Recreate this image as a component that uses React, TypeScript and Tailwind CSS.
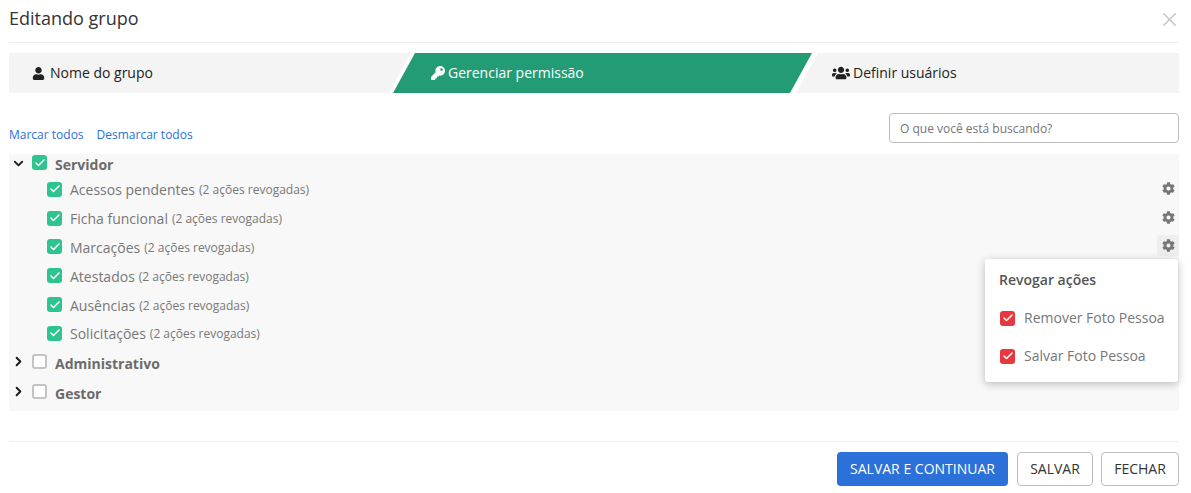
import { ChevronDown, ChevronRight, X, Check } from "lucide-react";
import { FaUser, FaKey, FaUsers, FaCog } from "react-icons/fa";

const children = ["Acessos pendentes", "Ficha funcional", "Marcações", "Atestados", "Ausências", "Solicitações"];

const Box = ({ color = "green" }: { color?: "green" | "red" | "empty" }) => {
  if (color === "empty") {
    return <span className="block w-[15px] h-[15px] shrink-0 rounded-[3px] border-2 border-[#c4c4c4] bg-white" />;
  }
  return (
    <span
      className={`flex items-center justify-center w-[15px] h-[15px] shrink-0 rounded-[3px] text-white ${
        color === "red" ? "bg-[#e5383f]" : "bg-[#2ec490]"
      }`}
    >
      <Check size={12} strokeWidth={3} />
    </span>
  );
};

const Parent = ({ label, open, checked, first }: { label: string; open?: boolean; checked?: boolean; first?: boolean }) => (
  <div className={`flex items-center pl-[2px] ${first ? "h-[22px]" : "h-[30px]"}`}>
    <span className="w-[21px] -mt-[4px] text-[#1a1a1a]">
      {open ? <ChevronDown size={15} strokeWidth={3} /> : <ChevronRight size={15} strokeWidth={3} />}
    </span>
    <span className="-mt-[5px]">
      <Box color={checked ? "green" : "empty"} />
    </span>
    <span className="ml-2 text-sm font-bold text-[#6b6b6b]">{label}</span>
  </div>
);

export default function App() {
  return (
    <div className="relative w-[1191px] h-[493px] bg-white pl-[9px] pr-[12px] overflow-hidden font-['Open_Sans',sans-serif] text-[#333]">
      {/* Cabeçalho */}
      <div className="flex items-center justify-between h-[43px] pb-[6px] border-b border-[#eeeeee]">
        <h1 className="text-lg text-[#333]">Editando grupo</h1>
        <X size={23} strokeWidth={1.5} className="text-[#c4c4c4] -mr-[1px] mt-[3px] translate-x-[1px]" />
      </div>

      {/* Etapas */}
      <div className="flex h-10 mt-[10px] text-sm">
        <div className="flex items-center gap-[5px] w-[402px] pl-[23px] bg-[#f4f4f4] text-[#222] [clip-path:polygon(0_0,100%_0,calc(100%-22px)_100%,0_100%)]">
          <FaUser size={13} />
          Nome do grupo
        </div>
        <div className="flex items-center gap-[3px] w-[419px] -ml-[18px] pl-[38px] bg-[#239c76] text-white [clip-path:polygon(22px_0,100%_0,calc(100%-22px)_100%,0_100%)]">
          <FaKey size={14} />
          Gerenciar permissão
        </div>
        <div className="flex items-center gap-[3px] flex-1 -ml-[16px] pl-[36px] bg-[#f4f4f4] text-[#222] [clip-path:polygon(22px_0,100%_0,100%_100%,0_100%)]">
          <FaUsers size={18} />
          Definir usuários
        </div>
      </div>

      {/* Ações e busca */}
      <div className="flex items-end justify-between h-[30px] mt-5">
        <div className="flex gap-[13px] text-xs text-[#2a6fdb]">
          <a href="#">Marcar todos</a>
          <a href="#">Desmarcar todos</a>
        </div>
        <input
          placeholder="O que você está buscando?"
          className="w-[290px] h-[30px] px-[10px] text-xs border border-[#bdbdbd] rounded-[4px] outline-none placeholder:text-[#757575]"
        />
      </div>

      {/* Árvore */}
      <div className="relative h-[257px] mt-[11px] bg-[#f8f8f8]">
        <Parent label="Servidor" open checked first />
        <div className="flex flex-col">
          {children.map((item, i) => (
            <div key={item} className="flex items-center h-[28.8px] pl-[38px]">
              <span className="-mt-[2px]">
                <Box />
              </span>
              <span className="ml-2 text-sm text-[#777]">{item}</span>
              <span className="ml-1 text-xs text-[#777]">(2 ações revogadas)</span>
              <span
                className={`ml-auto -mt-[4px] flex items-center justify-center w-[22px] h-[21px] rounded-[3px] text-[#777] ${
                  i === 2 ? "bg-[#eeeeee]" : ""
                } ${i > 2 ? "invisible" : ""}`}
              >
                <FaCog size={13} />
              </span>
            </div>
          ))}
        </div>
        <Parent label="Administrativo" />
        <Parent label="Gestor" />

        {/* Popover de revogação */}
        <div className="absolute left-[976px] top-[105px] w-[193px] h-[123px] bg-white rounded-[3px] shadow-[0_2px_8px_rgba(0,0,0,0.25)] pl-[14px] pt-[11px]">
          <div className="text-sm font-semibold text-[#555]">Revogar ações</div>
          <div className="flex items-center mt-[18px] h-5 pl-px">
            <Box color="red" />
            <span className="ml-[9px] text-sm text-[#777]">Remover Foto Pessoa</span>
          </div>
          <div className="flex items-center mt-[18px] h-5 pl-px">
            <Box color="red" />
            <span className="ml-[9px] text-sm text-[#777]">Salvar Foto Pessoa</span>
          </div>
        </div>
      </div>

      {/* Rodapé */}
      <div className="flex justify-end gap-[8px] mt-[30px] pt-[10px] border-t border-[#eeeeee]">
        <button className="h-[34px] w-[171px] mr-[1px] rounded-[4px] bg-[#2c70da] text-white text-sm">SALVAR E CONTINUAR</button>
        <button className="h-[34px] w-[76px] rounded-[4px] border border-[#bdbdbd] text-sm text-[#333]">SALVAR</button>
        <button className="h-[34px] w-[78px] rounded-[4px] border border-[#bdbdbd] text-sm text-[#333]">FECHAR</button>
      </div>
    </div>
  );
}
